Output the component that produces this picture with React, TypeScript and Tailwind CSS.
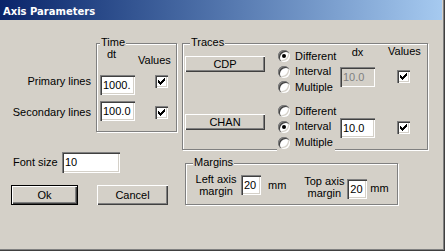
import React from "react";

const sunken =
  "shadow-[inset_1px_1px_0_#808080,inset_2px_2px_0_#404040,inset_-1px_-1px_0_#ffffff,inset_-2px_-2px_0_#d4d0c8]";
const raised =
  "shadow-[inset_1px_1px_0_#ffffff,inset_-1px_-1px_0_#404040,inset_-2px_-2px_0_#808080]";
const etched = "border border-[#808080] shadow-[inset_1px_1px_0_#ffffff,1px_1px_0_#ffffff]";

function Tick() {
  return (
    <svg width="7" height="7" viewBox="0 0 7 7" shapeRendering="crispEdges">
      <path
        fill="#000"
        d="M6 0h1v1h-1zM5 1h2v1h-2zM0 2h1v1h-1zM4 2h3v1h-3zM0 3h2v1h-2zM3 3h3v1h-3zM0 4h5v1h-5zM1 5h3v1h-3zM2 6h1v1h-1z"
      />
    </svg>
  );
}

function CheckBox({ className = "" }: { className?: string }) {
  return (
    <span className={`flex h-[13px] w-[13px] items-center justify-center bg-white ${sunken} ${className}`}>
      <Tick />
    </span>
  );
}

function Radio({ label, on, className }: { label: string; on?: boolean; className: string }) {
  return (
    <div className={`flex w-fit items-center bg-[#d4d0c8] pl-[1px] pr-[2px] ${className}`}>
      <span className={`flex h-[12px] w-[12px] items-center justify-center rounded-full bg-white ${sunken}`}>
        {on && <span className="h-[4px] w-[4px] rounded-full bg-black" />}
      </span>
      <span className="ml-[5px]">{label}</span>
    </div>
  );
}

function Field({ value, className, disabled }: { value: string; className: string; disabled?: boolean }) {
  return (
    <div
      className={`flex items-center overflow-hidden whitespace-nowrap pl-[3px] ${sunken} ${
        disabled ? "bg-[#d4d0c8] text-[#808080]" : "bg-white text-black"
      } ${className}`}
    >
      {value}
    </div>
  );
}

function Btn({ label, className, isDefault }: { label: string; className: string; isDefault?: boolean }) {
  const edge = isDefault
    ? "shadow-[inset_0_0_0_1px_#000000,inset_2px_2px_0_#ffffff,inset_-2px_-2px_0_#404040,inset_-3px_-3px_0_#808080]"
    : raised;
  return <div className={`flex items-center justify-center bg-[#d4d0c8] ${edge} ${className}`}>{label}</div>;
}

function Legend({ text, className }: { text: string; className: string }) {
  return (
    <span className={`absolute -top-[7px] bg-[#d4d0c8] px-[1px] leading-[11px] ${className}`}>{text}</span>
  );
}

export default function App() {
  return (
    <div className="h-[251px] w-[445px] overflow-hidden bg-[#d4d0c8] font-['Liberation_Sans',Arial,sans-serif] text-[11px] leading-[13px] text-black">
      <div className="flex h-full flex-col border-r border-b border-[#404040]">
        <div className="flex h-full flex-col border-r border-b border-[#808080]">
          {/* title bar */}
          <div className="mr-[1px] flex h-[20px] items-center bg-linear-to-r from-[#0a246a] to-[#a6caf0] pl-[3px] pt-[2px] font-['DejaVu_Sans',sans-serif] text-[10px] font-bold text-white">
            Axis Parameters
          </div>

          {/* top row */}
          <div className="mt-[23px] flex items-start">
            <div className="w-[96px] pr-[5px] pt-[32px] text-right">
              <div>Primary lines</div>
              <div className="mt-[18px]">Secondary lines</div>
            </div>

            <div className={`relative h-[89px] w-[81px] ${etched}`}>
              <Legend text="Time" className="left-[3px]" />
              <div className="flex items-start">
                <div className="ml-[3px] w-[35px]">
                  <div className="mt-[5px] pl-[7px] leading-[11px]">dt</div>
                  <Field value="1000." className="mt-[15px] h-[20px] w-[35px]" />
                  <Field value="100.0" className="mt-[6px] h-[20px] w-[35px]" />
                </div>
                <div className="ml-[3px]">
                  <div className="mt-[11px] leading-[11px]">Values</div>
                  <CheckBox className="ml-[17px] mt-[9px]" />
                  <CheckBox className="ml-[17px] mt-[18px]" />
                </div>
              </div>
            </div>

            <div className={`relative ml-[5px] h-[107px] w-[246px] ${etched}`}>
              <Legend text="Traces" className="left-[7px]" />
              <div className="flex items-start">
                <Btn label="CDP" className="ml-[2px] mt-[12px] h-[16px] w-[80px]" />
                <div className="ml-[12px] mt-[4px] w-[63px]">
                  <Radio label="Different" on className="h-[16px]" />
                  <Radio label="Interval" className="h-[15px]" />
                  <Radio label="Multiple" className="h-[16px]" />
                </div>
                <div className="w-[35px]">
                  <div className="mt-[3px] text-center leading-[11px]">dx</div>
                  <Field value="10.0" disabled className="mt-[9px] h-[20px] w-[35px]" />
                </div>
                <div>
                  <div className="ml-[13px] mt-[2px] leading-[11px]">Values</div>
                  <CheckBox className="ml-[22px] mt-[13px]" />
                </div>
              </div>
              <div className="mt-[8px] flex items-start">
                <Btn label="CHAN" className="ml-[2px] mt-[11px] h-[16px] w-[80px]" />
                <div className="ml-[12px] w-[63px]">
                  <Radio label="Different" className="h-[16px]" />
                  <Radio label="Interval" on className="h-[15px]" />
                  <Radio label="Multiple" className="h-[17px]" />
                </div>
                <Field value="10.0" className="mt-[15px] h-[20px] w-[35px]" />
                <CheckBox className="ml-[22px] mt-[18px]" />
              </div>
            </div>
          </div>

          {/* bottom row */}
          <div className="flex items-start">
            <div className="w-[185px]">
              <div className="mt-[2px] flex items-center pl-[13px]">
                <span className="w-[49px]">Font size</span>
                <Field value="10" className="h-[21px] w-[58px]" />
              </div>
              <div className="mt-[12px] flex">
                <Btn label="Ok" isDefault className="ml-[11px] h-[20px] w-[67px]" />
                <Btn label="Cancel" className="ml-[19px] h-[20px] w-[71px]" />
              </div>
            </div>

            <div className={`relative mt-[13px] h-[42px] w-[213px] ${etched}`}>
              <Legend text="Margins" className="left-[7px]" />
              <div className="flex items-start">
                <div className="ml-[9px] mt-[9px] w-[42px] text-center leading-[12px]">
                  Left axis
                  <br />
                  margin
                </div>
                <Field value="20" className="ml-[4px] mt-[11px] h-[20px] w-[20px]" />
                <span className="ml-[7px] mt-[15px]">mm</span>
                <div className="ml-[17px] mt-[11px] w-[42px] text-center leading-[12px]">
                  Top axis
                  <br />
                  margin
                </div>
                <Field value="20" className="ml-[2px] mt-[15px] h-[20px] w-[20px]" />
                <span className="ml-[3px] mt-[18px]">mm</span>
              </div>
            </div>
          </div>
        </div>
      </div>
    </div>
  );
}
